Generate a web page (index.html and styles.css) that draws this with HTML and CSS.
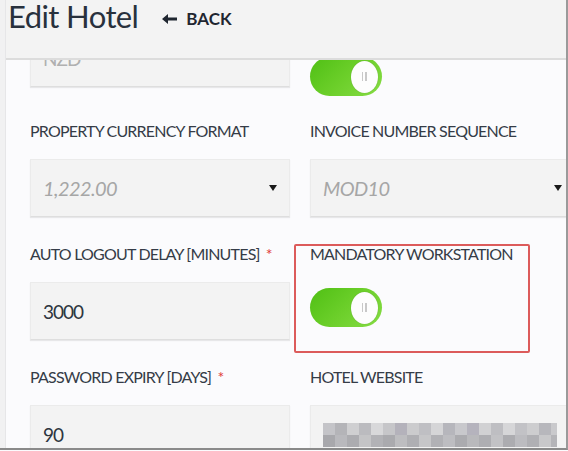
FILE: index.html
```html
<!DOCTYPE html>
<html>
<head>
<meta charset="utf-8">
<link rel="stylesheet" href="styles.css">
</head>
<body>
<div class="frame">
  <div class="side"></div>
  <div class="main">
    <header class="topbar">
      <h1 class="title">Edit Hotel</h1>
      <a class="back"><svg class="arrow" width="15" height="12" viewBox="0 0 15 12"><path d="M0 6 L6 1 L6 4.4 L15 4.4 L15 7.6 L6 7.6 L6 11 Z" fill="#1f2630"/></svg>BACK</a>
    </header>
    <div class="content">
      <div class="row partial">
        <div class="field">
          <div class="box"><span class="value muted">NZD</span></div>
        </div>
        <div class="field">
          <div class="toggle toggle-top"><span class="knob"><i></i></span></div>
        </div>
      </div>
      <div class="row">
        <div class="field">
          <label class="label">PROPERTY CURRENCY FORMAT</label>
          <div class="box select"><span class="value italic">1,222.00</span><span class="caret"></span></div>
        </div>
        <div class="field">
          <label class="label">INVOICE NUMBER SEQUENCE</label>
          <div class="box select"><span class="value italic">MOD10</span><span class="caret"></span></div>
        </div>
      </div>
      <div class="row">
        <div class="field">
          <label class="label">AUTO LOGOUT DELAY [MINUTES] <span class="req">*</span></label>
          <div class="box"><span class="value">3000</span></div>
        </div>
        <div class="field highlight">
          <label class="label">MANDATORY WORKSTATION</label>
          <div class="toggle"><span class="knob"><i></i></span></div>
        </div>
      </div>
      <div class="row">
        <div class="field">
          <label class="label">PASSWORD EXPIRY [DAYS] <span class="req">*</span></label>
          <div class="box"><span class="value">90</span></div>
        </div>
        <div class="field">
          <label class="label">HOTEL WEBSITE</label>
          <div class="box"><span class="mosaic" aria-label="hidden website"></span></div>
        </div>
      </div>
    </div>
  </div>
</div>
</body>
</html>
```
FILE: styles.css
```css
* { box-sizing: border-box; }
html, body { margin: 0; padding: 0; }
body {
  background: #fbfbfd;
  font-family: Lato, "Noto Sans", sans-serif;
  color: #333a45;
}
.frame {
  width: 568px;
  height: 450px;
  display: flex;
  overflow: hidden;
  border-right: 2px solid #9a9a9a;
  border-bottom: 2px solid #8a8a8a;
}
.side {
  width: 6px;
  flex: none;
  background: #f1f1f2;
  border-right: 1px solid #e6e6e8;
}
.main {
  flex: 1;
  min-width: 0;
  display: flex;
  flex-direction: column;
}
.topbar {
  position: relative;
  z-index: 2;
  height: 60px;
  flex: none;
  background: #f3f3f3;
  border-bottom: 2px solid #dcdcdc;
  display: flex;
  align-items: flex-start;
  padding-left: 2px;
}
.title {
  margin: 0;
  line-height: 32px;
  font-weight: 400;
  font-size: 31px;
  letter-spacing: -0.6px;
  color: #28313d;
}
.back {
  margin: 9px 0 0 24px;
  line-height: 20px;
  display: flex;
  align-items: center;
  gap: 9px;
  font-weight: 700;
  font-size: 17px;
  color: #1f2630;
}
.content {
  flex: 1;
  overflow: hidden;
  padding-left: 24px;
}
.row {
  display: flex;
  gap: 20px;
  margin-bottom: 27px;
}
.row.partial {
  margin-top: -31px;
  margin-bottom: 34px;
  height: 58px;
}
.field {
  width: 260px;
  flex: none;
  display: flex;
  flex-direction: column;
  align-items: flex-start;
}
.label {
  display: block;
  height: 20px;
  line-height: 20px;
  font-size: 16px;
  letter-spacing: -0.8px;
  color: #353c47;
  margin-bottom: 18px;
  white-space: nowrap;
}
.req { color: #e03a3a; margin-left: 3px; }
.box {
  width: 260px;
  height: 58px;
  flex: none;
  background: #f3f3f3;
  border: 1px solid #ebebeb;
  border-bottom-color: #dedede;
  box-shadow: 0 1px 1px rgba(0,0,0,0.08);
  display: flex;
  align-items: center;
  padding: 0 12px;
}
.field:nth-child(2) .box { width: 265px; }
.value {
  font-size: 19px;
  letter-spacing: -1px;
  color: #2e3540;
}
.value.italic { font-size: 20px; letter-spacing: -0.6px; font-style: italic; color: #a6a6a6; }
.value.muted { color: #b0b0b0; }
.select { justify-content: space-between; padding-right: 12px; }
.caret {
  width: 0; height: 0;
  border-left: 4px solid transparent;
  border-right: 4px solid transparent;
  border-top: 6px solid #1a1a1a;
}
.toggle {
  width: 72px;
  height: 39px;
  flex: none;
  border-radius: 20px;
  background: linear-gradient(135deg, #4fbf14 0%, #6ccf2a 50%, #86dc45 100%);
  display: flex;
  align-items: center;
  justify-content: flex-end;
  padding-right: 4px;
  margin-top: 6px;
}
.toggle-top { margin-top: 28px; }
.knob {
  width: 27px;
  height: 32px;
  border-radius: 50%;
  background: #fdfdfd;
  box-shadow: 0 0 1px rgba(0,0,0,0.25);
  display: flex;
  align-items: center;
  justify-content: center;
}
.knob i {
  width: 5px;
  height: 9px;
  border-left: 1px solid #c8c8c8;
  border-right: 1px solid #c8c8c8;
  background: linear-gradient(90deg, transparent 1.5px, #c8c8c8 1.5px, #c8c8c8 2.5px, transparent 2.5px);
}
.highlight { position: relative; }
.highlight::after {
  content: "";
  position: absolute;
  left: -16px;
  top: 0;
  width: 232px;
  height: 105px;
  border: 2px solid #dc5b5b;
  border-radius: 2px;
  pointer-events: none;
}
.mosaic {
  display: block;
  width: 234px;
  height: 24px;
  margin-top: 2px;
  background:
    linear-gradient(90deg, #c4c4c8 0 12px, #b4b4b8 12px 24px, #cfcfd1 24px 36px, #bbbbbf 36px 48px, #d8d8da 48px 60px, #c6c6c9 60px 72px, #b4b2bb 72px 84px, #cbcbcd 84px 96px, #bfbfc3 96px 108px, #d5d5d7 108px 120px, #b6b6bc 120px 132px, #c8c8cc 132px 144px, #b5b3bd 144px 156px, #d1d1d3 156px 168px, #bebec2 168px 180px, #d6d6d8 180px 192px, #c2c2c6 192px 204px, #cdcdcf 204px 216px, #b7b7bc 216px 228px, #c9c9cc 228px 234px) top / 100% 12px no-repeat,
    linear-gradient(90deg, #a8a8ac 0 12px, #b9b9bd 12px 24px, #acacb0 24px 36px, #c4c4c6 36px 48px, #b2b2b6 48px 60px, #aaaaae 60px 72px, #bdbdc0 72px 84px, #afafb3 84px 96px, #c6c6c8 96px 108px, #b1b1b5 108px 120px, #bdbdc1 120px 132px, #ababaf 132px 144px, #b9b9bc 144px 156px, #aeaeb2 156px 168px, #c2c2c5 168px 180px, #acacb0 180px 192px, #bcbcc0 192px 204px, #b0b0b4 204px 216px, #c8c8ca 216px 228px, #b4b4b8 228px 234px) bottom / 100% 12px no-repeat;
}
```
